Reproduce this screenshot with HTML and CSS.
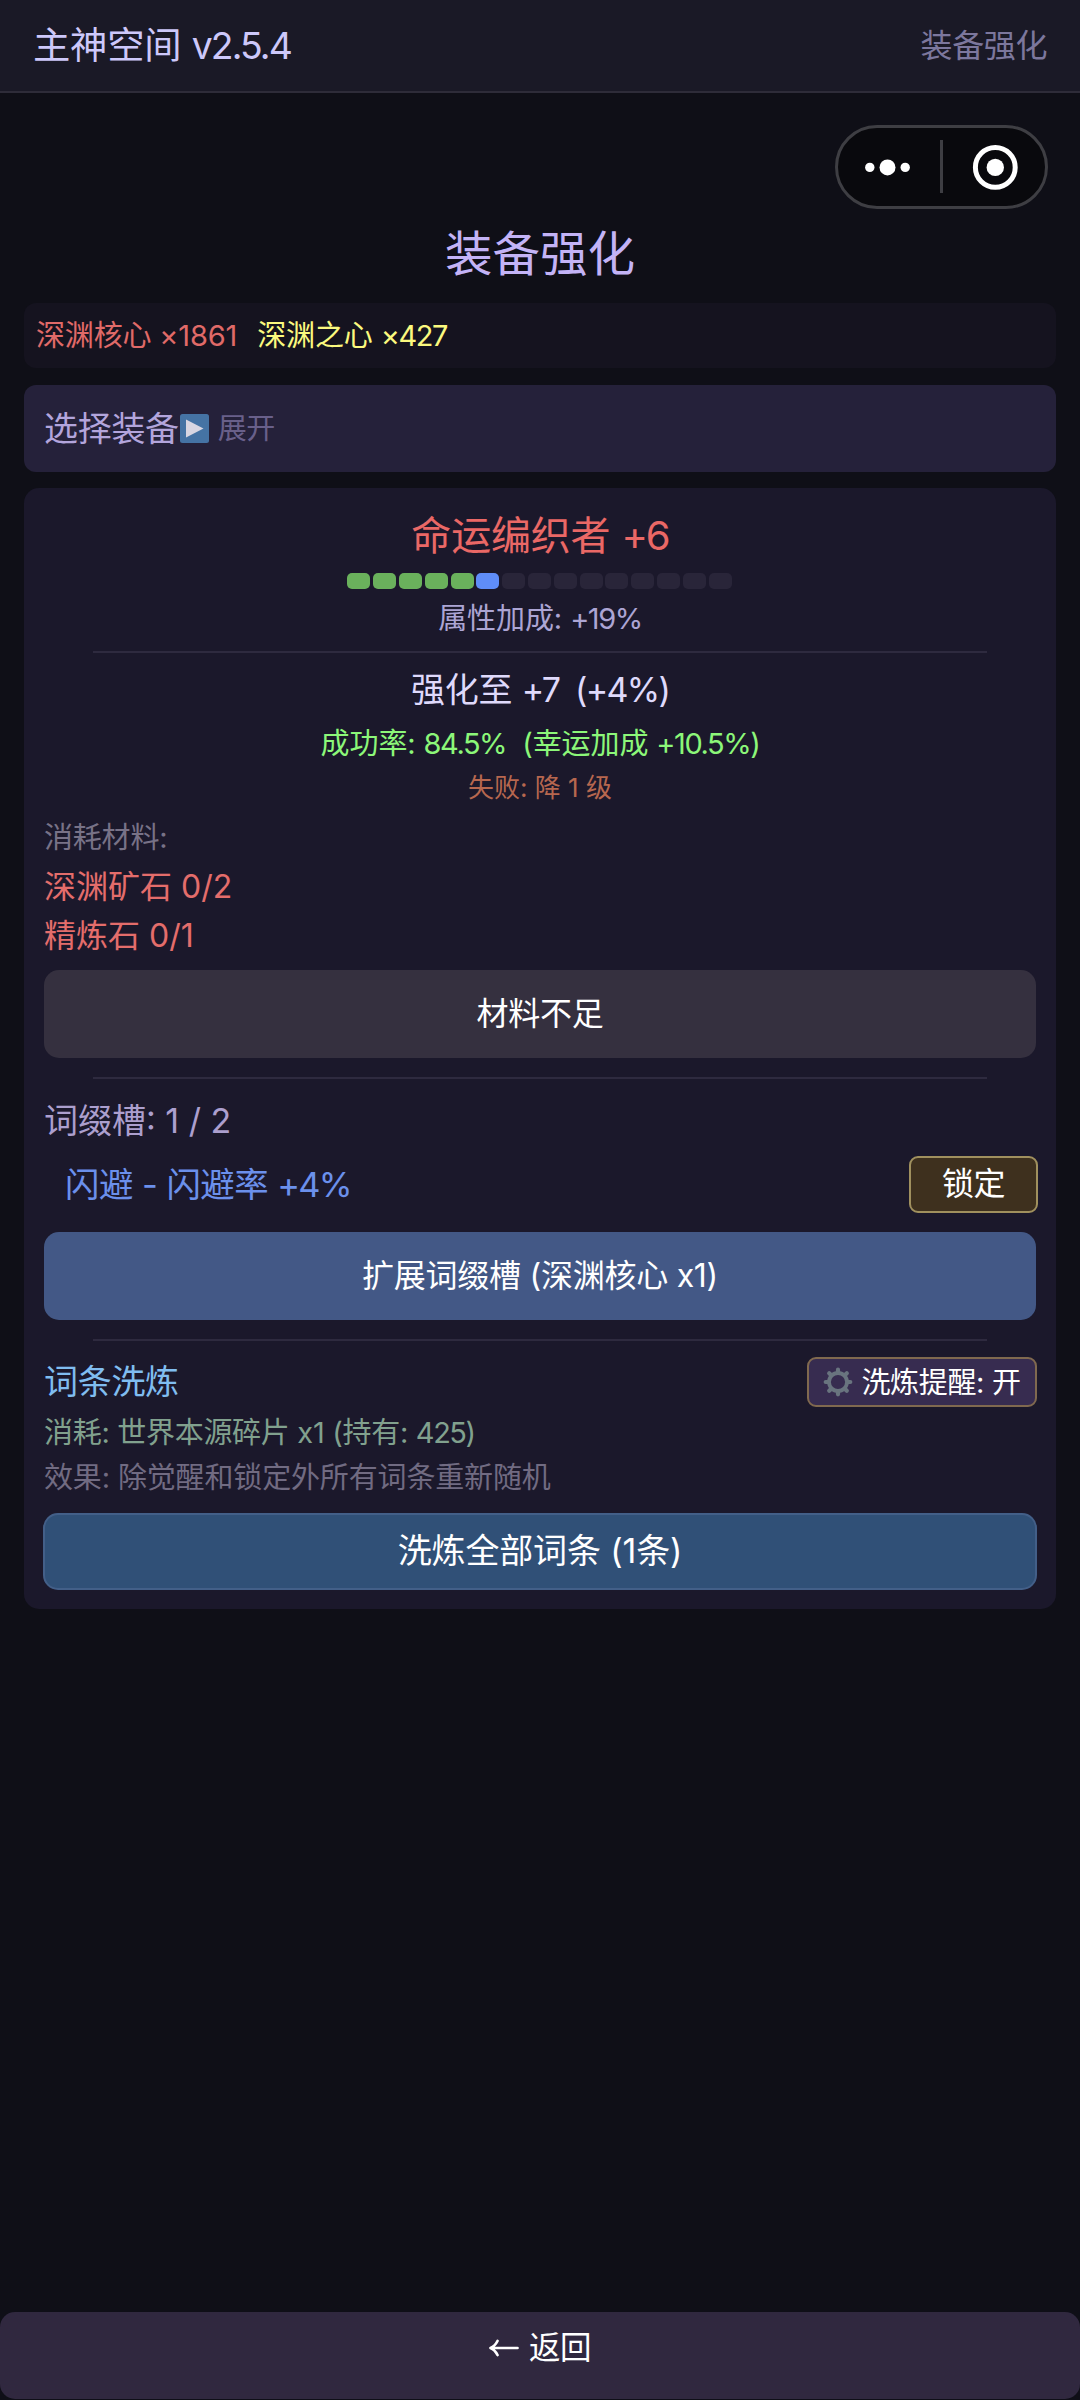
FILE: index.html
```html
<!DOCTYPE html>
<html lang="zh-CN">
<head>
<meta charset="utf-8">
<title>装备强化</title>
<link rel="stylesheet" href="styles.css">
</head>
<body>
<div class="app">
  <header class="topbar">
    <div class="app-name">主神空间 <span class="num">v2.5.4</span></div>
    <div class="page-name">装备强化</div>
  </header>

  <div class="capsule">
    <svg width="213" height="84" viewBox="0 0 213 84" aria-hidden="true">
      <rect x="1.5" y="1.5" width="210" height="81" rx="40.5" fill="#09090d" stroke="#3e3e43" stroke-width="3"/>
      <g fill="#fff">
        <circle cx="34.8" cy="42.4" r="4.7"/>
        <circle cx="52.5" cy="42.4" r="8"/>
        <circle cx="70.2" cy="42.4" r="4.7"/>
        <circle cx="160.3" cy="42.4" r="8.7"/>
      </g>
      <rect x="105" y="15" width="3" height="53" fill="#3e3e43"/>
      <circle cx="160.3" cy="42.4" r="19.9" fill="none" stroke="#fff" stroke-width="5"/>
    </svg>
  </div>

  <main class="content">
    <h1 class="title">装备强化</h1>

    <section class="currency">
      <span class="core">深渊核心 ×1861</span>
      <span class="heart">深渊之心 <span class="num">×427</span></span>
    </section>

    <section class="picker">
      <span class="picker-label">选择装备</span>
      <svg class="play" width="29" height="29" viewBox="0 0 29 29" aria-hidden="true">
        <rect width="29" height="29" rx="2.5" fill="#4573a4"/>
        <path d="M6 5.5V23.5L23.5 14.5Z" fill="#d8d6e2"/>
      </svg>
      <span class="picker-toggle">展开</span>
    </section>

    <section class="card">
      <h2 class="item-name">命运编织者 <span class="num">+6</span></h2>
      <div class="level-bar">
        <i class="seg done"></i><i class="seg done"></i><i class="seg done"></i><i class="seg done"></i><i class="seg done"></i>
        <i class="seg current"></i><i class="seg"></i><i class="seg"></i><i class="seg"></i><i class="seg"></i>
        <i class="seg"></i><i class="seg"></i><i class="seg"></i><i class="seg"></i><i class="seg"></i>
      </div>
      <div class="bonus">属性加成: <span class="num">+19%</span></div>
      <hr class="rule rule-first">
      <div class="next-level">强化至 <span class="num">+7&nbsp; (+4%)</span></div>
      <div class="chance">成功率: <span class="num">84.5%</span>&nbsp; (幸运加成 <span class="num">+10.5%)</span></div>
      <div class="penalty">失败: 降 1 级</div>
      <div class="cost-label">消耗材料:</div>
      <div class="material">深渊矿石 0/2</div>
      <div class="material second">精炼石 0/1</div>
      <button class="btn btn-disabled">材料不足</button>
      <hr class="rule">
      <div class="slots">词缀槽: 1 / 2</div>
      <div class="affix-row">
        <span class="affix">闪避 - 闪避率 <span class="num">+4%</span></span>
        <button class="lock">锁定</button>
      </div>
      <button class="btn btn-expand">扩展词缀槽 (深渊核心 x1)</button>
      <hr class="rule">
      <div class="reforge-row">
        <span class="reforge-title">词条洗炼</span>
        <button class="remind">
          <svg width="30" height="30" viewBox="-15 -15 30 30" aria-hidden="true">
            <circle r="9" fill="none" stroke="#69747f" stroke-width="3.8"/>
            <g stroke="#69747f" stroke-width="4.2" stroke-linecap="round">
              <path d="M0-10V-12.3M0 10V12.3M-10 0H-12.3M10 0H12.3M7.5-7.5 8.8-8.8M-7.5 7.5-8.8 8.8M-7.5-7.5-8.8-8.8M7.5 7.5 8.8 8.8"/>
            </g>
          </svg>
          <span>洗炼提醒: 开</span>
        </button>
      </div>
      <div class="reforge-cost">消耗: 世界本源碎片 x1 (持有: <span class="num">425)</span></div>
      <div class="reforge-effect">效果: 除觉醒和锁定外所有词条重新随机</div>
      <button class="btn btn-reforge">洗炼全部词条 (1条)</button>
    </section>
  </main>

  <button class="back">
    <svg width="30" height="18" viewBox="0 0 30 18" fill="none" stroke="#fff" stroke-width="2.7" stroke-linecap="round" stroke-linejoin="round" aria-hidden="true">
      <path d="M28.5 9H2M8.5 2C7 5 4.5 7.8 1.5 9 4.5 10.2 7 13 8.5 16"/>
    </svg>
    <span>返回</span>
  </button>
</div>
</body>
</html>
```
FILE: styles.css
```css
* { box-sizing: border-box; margin: 0; padding: 0; }

body {
  background: #0f0f17;
  color: #fff;
  font-family: Inter, "Noto Sans CJK SC", sans-serif;
  font-weight: 400;
  line-height: 1.2;
}

h1, h2 { font-weight: 400; }

button {
  font-family: inherit;
  line-height: inherit;
  color: #fff;
  border: 0;
  display: flex;
  align-items: center;
  justify-content: center;
  white-space: nowrap;
}

.num { letter-spacing: -0.05em; }

.app {
  width: 1080px;
  height: 2400px;
  display: flex;
  flex-direction: column;
  white-space: nowrap;
}

.topbar {
  height: 93px;
  padding: 2px 33px 0;
  display: flex;
  align-items: center;
  justify-content: space-between;
  background: #1a1926;
  border-bottom: 2px solid #2e2c39;
}
.app-name { font-size: 37.3px; letter-spacing: -0.2px; color: #cdc8fa; }
.page-name { font-size: 32px; letter-spacing: -0.4px; color: #7c779d; }

.capsule { display: flex; justify-content: flex-end; padding: 32px 32px 0 0; }
.capsule svg { display: block; }

.content { padding: 0 24px; display: flex; flex-direction: column; }

.title {
  margin-top: 15px;
  height: 60px;
  line-height: 60px;
  text-align: center;
  font-size: 47.5px;
  color: #c3b3f6;
}

.currency {
  margin-top: 19px;
  height: 65px;
  padding: 2px 12px 0;
  display: flex;
  align-items: center;
  gap: 20px;
  border-radius: 12px;
  background: #15131f;
  font-size: 29px;
}
.core { color: #e06a68; letter-spacing: -0.17px; }
.heart { color: #fbf97e; letter-spacing: -0.1px; }

.picker {
  margin-top: 17px;
  height: 87px;
  padding: 0 20px;
  display: flex;
  align-items: center;
  border-radius: 12px;
  background: #25213a;
}
.picker-label { padding-top: 1px; font-size: 34px; letter-spacing: -0.3px; color: #b3a5dc; }
.play { margin-left: 1px; }
.picker-toggle { padding-top: 2px; margin-left: 9px; font-size: 29px; letter-spacing: -0.6px; color: #69608a; }

.card {
  margin-top: 16px;
  height: 1121px;
  padding: 22px 20px 19px;
  display: flex;
  flex-direction: column;
  border-radius: 15px;
  background: #1b182b;
}

.item-name { line-height: 52px; text-align: center; font-size: 40px; letter-spacing: -0.2px; color: #ea6866; }

.level-bar { margin: 11px 1px 0 0; height: 16px; display: flex; justify-content: center; gap: 2.8px; }
.seg { width: 23px; border-radius: 5px; background: #292539; }
.seg.done { background: #6ab15c; }
.seg.current { background: #5f8df8; }

.bonus { margin-top: 9px; line-height: 42px; text-align: center; font-size: 29px; letter-spacing: -0.1px; color: #aca5d4; }

.rule { margin: 19px 49px 0; height: 2px; border: 0; background: #2e2a3f; }
.rule-first { margin-top: 11px; }

.next-level { margin-top: 13px; line-height: 48px; text-align: center; font-size: 34px; letter-spacing: -0.2px; color: #dfd9fb; }
.chance { margin-top: 8px; line-height: 43px; text-align: center; font-size: 29px; letter-spacing: -0.1px; color: #8cf779; }
.penalty { margin-top: 4px; line-height: 38px; text-align: center; font-size: 26px; color: #b7674f; }

.cost-label { margin-top: 10px; line-height: 42px; font-size: 29px; letter-spacing: -0.2px; color: #787287; }
.material { margin-top: 3px; line-height: 50px; font-size: 32px; color: #e46d6b; }
.material.second { margin-top: -1px; }

.btn { flex: none; width: 992px; height: 88px; border-radius: 15px; font-size: 32px; }
.btn-disabled { margin-top: 9px; background: #35303f; letter-spacing: -0.3px; }

.slots { margin-top: 18px; line-height: 48px; font-size: 34px; color: #ac9fce; }

.affix-row {
  margin: 11px -2px 0 0;
  padding-left: 21px;
  height: 57px;
  display: flex;
  align-items: center;
  justify-content: space-between;
}
.affix { font-size: 34.4px; letter-spacing: -0.5px; color: #6b90ec; }
.lock {
  width: 129px;
  height: 57px;
  border: 2px solid #a0905e;
  border-radius: 9px;
  background: #3e301e;
  font-size: 32px;
  letter-spacing: -0.6px;
}

.btn-expand { margin-top: 19px; background: #435886; letter-spacing: -0.25px; }

.reforge-row {
  margin: 16px -1px 0 0;
  height: 50px;
  display: flex;
  align-items: center;
  justify-content: space-between;
}
.reforge-title { padding-top: 1px; font-size: 34px; letter-spacing: -0.3px; color: #80bdf0; }
.remind {
  width: 230px;
  height: 50px;
  gap: 8px;
  border: 2px solid #80694f;
  border-radius: 9px;
  background: #372c50;
  font-size: 29px;
  letter-spacing: -0.35px;
}
.remind span { padding-top: 2px; }

.reforge-cost { margin-top: 5px; line-height: 42px; font-size: 29px; letter-spacing: -0.3px; color: #81a18e; }
.reforge-effect { margin-top: 3px; line-height: 42px; font-size: 29px; letter-spacing: -0.15px; color: #716b82; }

.btn-reforge {
  margin: 14px -1px 0;
  width: 994px;
  height: 77px;
  border: 2px solid #435f88;
  background: #305077;
  font-size: 34px;
  letter-spacing: -0.15px;
}

.back {
  margin-top: auto;
  margin-bottom: 1px;
  flex: none;
  width: 1080px;
  height: 87px;
  padding-bottom: 15px;
  gap: 10px;
  border-radius: 15px;
  background: #30283f;
  font-size: 31.5px;
  letter-spacing: -0.5px;
}
```
